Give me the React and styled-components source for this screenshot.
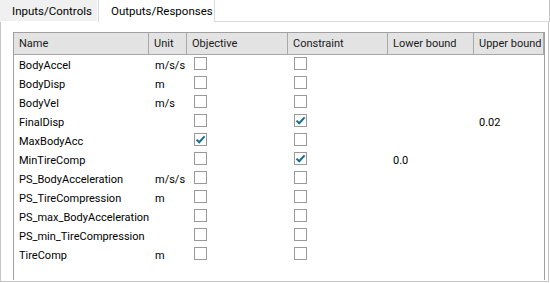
import React from 'react'
import styled, { createGlobalStyle } from 'styled-components'

const rows = [
  { name: 'BodyAccel', unit: 'm/s/s' },
  { name: 'BodyDisp', unit: 'm' },
  { name: 'BodyVel', unit: 'm/s' },
  { name: 'FinalDisp', unit: '', constraint: true, upper: '0.02' },
  { name: 'MaxBodyAcc', unit: '', objective: true },
  { name: 'MinTireComp', unit: '', constraint: true, lower: '0.0' },
  { name: 'PS_BodyAcceleration', unit: 'm/s/s' },
  { name: 'PS_TireCompression', unit: 'm' },
  { name: 'PS_max_BodyAcceleration', unit: '' },
  { name: 'PS_min_TireCompression', unit: '' },
  { name: 'TireComp', unit: 'm' },
]

const headers = ['Name', 'Unit', 'Objective', 'Constraint', 'Lower bound', 'Upper bound']

function Check({ checked }) {
  return (
    <Box>
      {checked && (
        <svg width="11" height="11" viewBox="0 0 11 11">
          <path d="M1.5 5.6 L4.2 8.2 L9.6 2.4" fill="none" stroke="#1b6a8e" strokeWidth="2" />
        </svg>
      )}
    </Box>
  )
}

function App() {
  return (
    <>
      <Global />
      <Window>
        <TabBar>
          <Tab>Inputs/Controls</Tab>
          <Tab active>Outputs/Responses</Tab>
          <TabFill />
        </TabBar>
        <Panel>
          <Frame>
            <Grid>
              {headers.map((h) => (
                <Head key={h}>{h}</Head>
              ))}
              {rows.map((r) => (
                <React.Fragment key={r.name}>
                  <Cell>{r.name}</Cell>
                  <Cell pad={6}>{r.unit}</Cell>
                  <CheckCell pad={7}><Check checked={r.objective} /></CheckCell>
                  <CheckCell pad={6}><Check checked={r.constraint} /></CheckCell>
                  <Cell>{r.lower}</Cell>
                  <Cell>{r.upper}</Cell>
                </React.Fragment>
              ))}
            </Grid>
          </Frame>
        </Panel>
      </Window>
    </>
  )
}

export default App

const Global = createGlobalStyle`
  body {
    margin: 0;
    background: #ffffff;
    font-family: Roboto, "Liberation Sans", sans-serif;
    font-size: 11px;
    color: #000;
  }
`

const Window = styled.div`
  width: 550px;
  height: 283px;
  display: flex;
  flex-direction: column;
  box-sizing: border-box;
`

const TabBar = styled.div`
  display: flex;
  height: 22px;
  flex: none;
`

const Tab = styled.div`
  height: ${(p) => (p.active ? '22px' : '21px')};
  width: ${(p) => (p.active ? '117px' : '97px')};
  margin-right: ${(p) => (p.active ? '0' : '1px')};
  box-sizing: border-box;
  padding-left: 12px;
  padding-top: 1px;
  line-height: 21px;
  font-size: 11.5px;
  background: ${(p) => (p.active ? '#ffffff' : '#f0f0f0')};
  border: ${(p) => (p.active ? '1px solid #d9d9d9' : 'none')};
  border-bottom: none;
  border-top: none;
  white-space: nowrap;
`

const TabFill = styled.div`
  flex: 1;
  border-bottom: 1px solid #d9d9d9;
  border-right: 1px solid #c4c4c4;
`

const Panel = styled.div`
  flex: 1;
  display: flex;
  box-sizing: border-box;
  padding: 10px 3px 1px 12px;
  border: 1px solid #c4c4c4;
  border-top: none;
  margin-right: 1px;
  margin-bottom: 1px;
`

const Frame = styled.div`
  flex: 1;
  border: 1px solid #a0a0a0;
  border-bottom: none;
  background: #fff;
`

const Grid = styled.div`
  display: grid;
  grid-template-columns: 135px 38px 101px 100px 86px 1fr;
  grid-auto-rows: 19px;
  grid-template-rows: 22px;
`

const Head = styled.div`
  background: #e3e3e3;
  border-right: 1px solid #a8a8a8;
  border-bottom: 1px solid #a8a8a8;
  padding-left: 5px;
  padding-top: 1px;
  line-height: 20px;
  white-space: nowrap;
  color: #1a1a1a;
  &:last-of-type {
    border-right: none;
  }
`

const Cell = styled.div`
  padding-left: ${(p) => (p.pad != null ? p.pad : 5)}px;
  padding-top: 3px;
  line-height: 16px;
  white-space: nowrap;
  overflow: hidden;
`

const CheckCell = styled.div`
  padding-left: ${(p) => p.pad}px;
  padding-top: 2px;
`

const Box = styled.div`
  width: 13px;
  height: 13px;
  box-sizing: border-box;
  border: 1px solid #999999;
  background: #fff;
  display: flex;
  align-items: center;
  justify-content: center;
`
